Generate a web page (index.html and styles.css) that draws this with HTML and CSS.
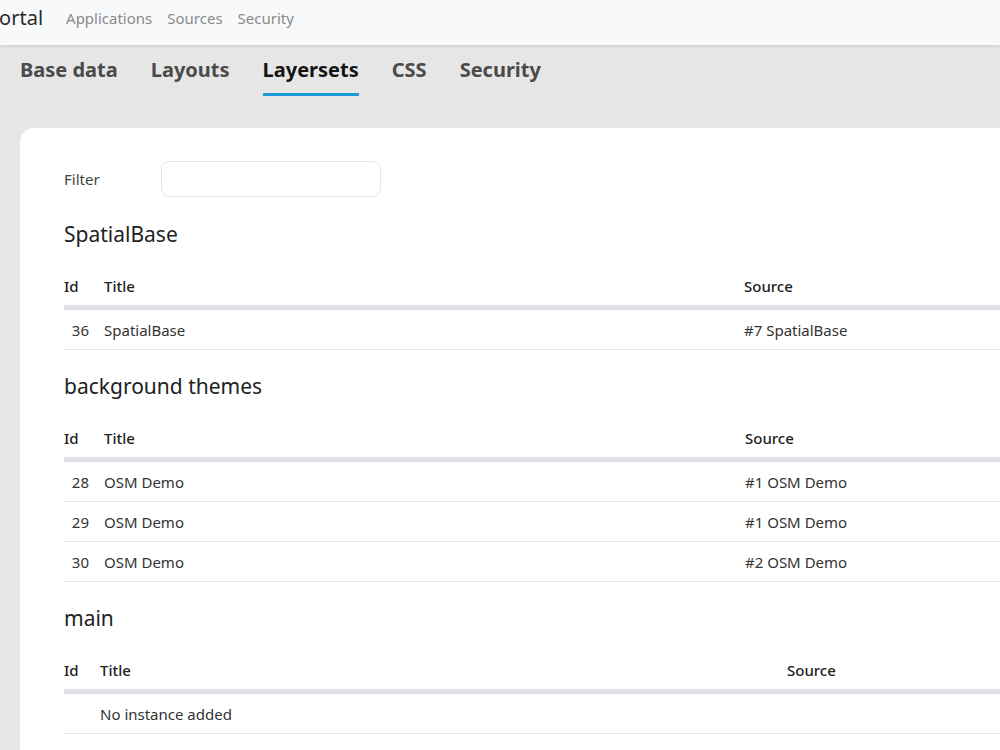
FILE: index.html
```html
<!DOCTYPE html>
<html lang="en">
<head>
    <meta charset="UTF-8">
    <meta name="viewport" content="width=device-width, initial-scale=1.0">
    <title>Portal - Layersets</title>
    <link rel="stylesheet" href="styles.css">
</head>
<body>
    <nav class="navbar">
        <span class="brand">Portal</span>
        <a class="nav-link" href="#">Applications</a>
        <a class="nav-link" href="#">Sources</a>
        <a class="nav-link" href="#">Security</a>
    </nav>

    <div class="tabs">
        <a class="tab" href="#">Base data</a>
        <a class="tab" href="#">Layouts</a>
        <a class="tab active" href="#">Layersets</a>
        <a class="tab" href="#">CSS</a>
        <a class="tab" href="#">Security</a>
    </div>

    <div class="card">
        <div class="filter-row">
            <label for="filter">Filter</label>
            <input id="filter" type="text">
        </div>

        <h3 class="set-title">SpatialBase</h3>
        <table class="instances">
            <colgroup><col class="c-id"><col class="c-title"><col></colgroup>
            <thead>
                <tr><th>Id</th><th>Title</th><th>Source</th></tr>
            </thead>
            <tbody>
                <tr><td class="id">36</td><td>SpatialBase</td><td>#7 SpatialBase</td></tr>
            </tbody>
        </table>

        <h3 class="set-title">background themes</h3>
        <table class="instances">
            <colgroup><col class="c-id"><col class="c-title wide1"><col></colgroup>
            <thead>
                <tr><th>Id</th><th>Title</th><th>Source</th></tr>
            </thead>
            <tbody>
                <tr><td class="id">28</td><td>OSM Demo</td><td>#1 OSM Demo</td></tr>
                <tr><td class="id">29</td><td>OSM Demo</td><td>#1 OSM Demo</td></tr>
                <tr><td class="id">30</td><td>OSM Demo</td><td>#2 OSM Demo</td></tr>
            </tbody>
        </table>

        <h3 class="set-title">main</h3>
        <table class="instances">
            <colgroup><col class="c-id narrow"><col class="c-title wide2"><col></colgroup>
            <thead>
                <tr><th>Id</th><th>Title</th><th>Source</th></tr>
            </thead>
            <tbody>
                <tr><td class="id"></td><td>No instance added</td><td></td></tr>
            </tbody>
        </table>
    </div>
</body>
</html>
```

FILE: styles.css
```css
body, html {
    margin: 0;
    padding: 0;
    overflow: hidden;
}
body {
    background: #e6e6e6;
    font-family: "Noto Sans", "Open Sans", sans-serif;
    color: #333;
    font-size: 15px;
}
a {
    text-decoration: none;
}

/* top navbar */
.navbar {
    height: 45px;
    box-sizing: border-box;
    padding-top: 8px;
    background: #f8f9fa;
    display: flex;
    align-items: flex-start;
    line-height: 20px;
    box-shadow: 0 1px 4px rgba(0, 0, 0, 0.12);
    position: relative;
}
.brand {
    font-size: 20px;
    color: #2b2b2b;
    margin-left: -13px;
    margin-right: 23px;
}
.nav-link {
    color: #8a8a8a;
    font-size: 15px;
    margin-right: 15px;
}

/* tabs */
.tabs {
    display: flex;
    gap: 33px;
    padding: 0 20px;
    margin-top: 11px;
}
.tab {
    font-size: 20px;
    font-weight: 700;
    color: #4a4a4a;
    padding-bottom: 10px;
    border-bottom: 3px solid transparent;
}
.tab.active {
    color: #141414;
    border-bottom-color: #1e9ad8;
}

/* content card */
.card {
    background: #fff;
    margin: 32px 0 0 20px;
    width: 1100px;
    border-radius: 14px 0 0 0;
    padding: 33px 44px 40px;
}
.filter-row {
    display: flex;
    align-items: center;
    margin-bottom: 24px;
}
.filter-row label {
    width: 97px;
    color: #444;
}
.filter-row input {
    width: 220px;
    height: 36px;
    border: 1px solid #e3e6e9;
    border-radius: 8px;
    padding: 0 10px;
    box-sizing: border-box;
}
.set-title {
    font-size: 21px;
    font-weight: 400;
    line-height: 26px;
    color: #222;
    margin: 0 0 20px;
}

/* tables */
.instances {
    width: 100%;
    border-collapse: collapse;
    margin-bottom: 23px;
}
.c-id {
    width: 40px;
}
.c-id.narrow {
    width: 36px;
}
.c-title {
    width: 640px;
}
.c-title.wide1 {
    width: 641px;
}
.c-title.wide2 {
    width: 687px;
}
.instances th {
    text-align: left;
    font-weight: 500;
    color: #222;
    line-height: 22px;
    padding: 8px 0;
    border-bottom: 5px solid #dee2e6;
}
.instances td {
    height: 39px;
    padding: 0;
    border-bottom: 1px solid #e4e6e8;
    color: #333;
}
.instances td.id {
    text-align: right;
    padding-right: 15px;
}
```
